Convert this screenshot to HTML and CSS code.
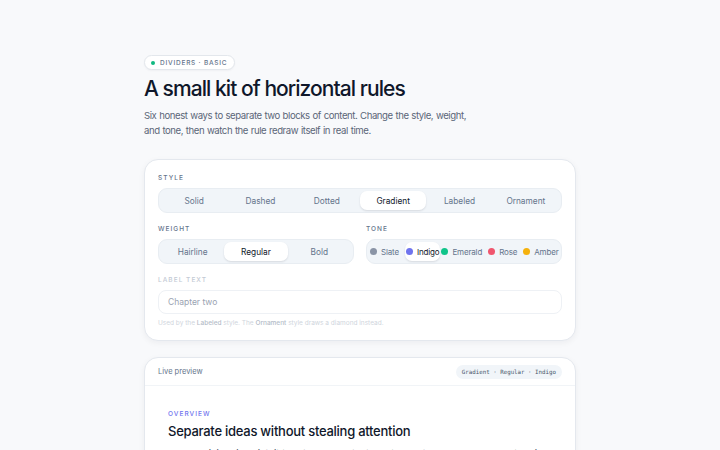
FILE: index.html
```html
<!DOCTYPE html>
<html>
<head>
<meta charset="utf-8">
<link rel="stylesheet" href="styles.css">
</head>
<body>
<main class="page">
  <div class="eyebrow"><span class="dot"></span>DIVIDERS · BASIC</div>
  <h1 class="title">A small kit of horizontal rules</h1>
  <p class="lead">Six honest ways to separate two blocks of content. Change the style, weight, and tone, then watch the rule redraw itself in real time.</p>

  <section class="card controls">
    <div class="label">STYLE</div>
    <div class="seg seg-6">
      <span class="opt">Solid</span>
      <span class="opt">Dashed</span>
      <span class="opt">Dotted</span>
      <span class="opt active">Gradient</span>
      <span class="opt">Labeled</span>
      <span class="opt">Ornament</span>
    </div>
    <div class="row">
      <div class="col">
        <div class="label">WEIGHT</div>
        <div class="seg seg-3">
          <span class="opt">Hairline</span>
          <span class="opt active">Regular</span>
          <span class="opt">Bold</span>
        </div>
      </div>
      <div class="col">
        <div class="label">TONE</div>
        <div class="seg tones">
          <span class="tone"><i class="sw slate"></i>Slate</span>
          <span class="tone active"><i class="sw indigo"></i>Indigo</span>
          <span class="tone"><i class="sw emerald"></i>Emerald</span>
          <span class="tone"><i class="sw rose"></i>Rose</span>
          <span class="tone"><i class="sw amber"></i>Amber</span>
        </div>
      </div>
    </div>
    <div class="disabled">
      <div class="label">LABEL TEXT</div>
      <div class="input">Chapter two</div>
      <div class="help">Used by the <b>Labeled</b> style. The <b>Ornament</b> style draws a diamond instead.</div>
    </div>
  </section>

  <section class="card preview">
    <header class="phead">
      <span class="ptitle">Live preview</span>
      <span class="badge">Gradient · Regular · Indigo</span>
    </header>
    <div class="pbody">
      <div class="kicker">OVERVIEW</div>
      <h2 class="ph">Separate ideas without stealing attention</h2>
      <p class="pp">A good divider is quiet: it tells the reader that one thought has ended and another is about to begin, without shouting.</p>
    </div>
  </section>
</main>
</body>
</html>
```

FILE: styles.css
```css
* { box-sizing: border-box; }
html, body { margin: 0; padding: 0; }
body {
  background: #f8f9fb;
  font-family: Inter, "Noto Sans", sans-serif;
  color: #0f172a;
}
.page {
  width: 432px;
  margin: 0 auto;
  padding-top: 55px;
}
.eyebrow {
  display: flex;
  width: max-content;
  align-items: center;
  gap: 5px;
  height: 15px;
  padding: 0 7px 0 6px;
  border: 1px solid #e3e7ec;
  border-radius: 999px;
  background: #fff;
  font-size: 6.5px;
  letter-spacing: 0.12em;
  color: #64748b;
  font-weight: 500;
  box-shadow: 0 1px 2px rgba(15,23,42,0.04);
}
.dot { width: 4px; height: 4px; border-radius: 50%; background: #10b981; }
.title {
  margin: 5px 0 0;
  font-size: 21px;
  line-height: 28px;
  font-weight: 500;
  letter-spacing: -0.045em;
  color: #0f172a;
}
.lead {
  margin: 5px 0 0;
  width: 330px;
  font-size: 9.6px;
  line-height: 15px;
  color: #5b6678;
  letter-spacing: -0.045em;
  word-spacing: 0.05em;
}
.card {
  background: #fff;
  border: 1px solid #e4e8ee;
  border-radius: 14px;
  box-shadow: 0 2px 6px rgba(15,23,42,0.05);
}
.controls {
  margin-top: 21px;
  padding: 14px 13px 13px;
}
.label {
  font-size: 6.5px;
  letter-spacing: 0.16em;
  font-weight: 500;
  color: #64748b;
  line-height: 8px;
  margin-bottom: 6px;
}
.seg {
  display: grid;
  height: 25px;
  padding: 2px;
  background: #f1f5f9;
  border: 1px solid #e8edf2;
  border-radius: 9px;
}
.seg-6 { grid-template-columns: repeat(6, 1fr); }
.seg-3 { grid-template-columns: repeat(3, 1fr); }
.opt {
  display: flex;
  align-items: center;
  justify-content: center;
  font-size: 8.3px;
  color: #64748b;
  border-radius: 7px;
}
.opt.active, .tone.active {
  background: #fff;
  color: #0f172a;
  box-shadow: 0 1px 2px rgba(15,23,42,0.12);
}
.row {
  display: grid;
  grid-template-columns: minmax(0, 1fr) minmax(0, 1fr);
  gap: 12px;
  margin-top: 12px;
}
.col { min-width: 0; }
.tones {
  display: flex;
  align-items: stretch;
  padding-left: 3px;
  overflow: hidden;
}
.tone {
  display: flex;
  flex: none;
  align-items: center;
  gap: 4px;
  margin-right: 6px;
  font-size: 8px;
  letter-spacing: -0.02em;
  color: #64748b;
  border-radius: 7px;
  white-space: nowrap;
}
.tone.active { margin-right: 1px; padding: 0 1px 0 1px; margin-left: 0; }
.sw { display: inline-block; width: 7px; height: 7px; border-radius: 50%; }
.slate { background: #8a94a6; }
.indigo { background: #6f74ee; }
.emerald { background: #10c48a; }
.rose { background: #f0566e; }
.amber { background: #f5b10c; }
.disabled { margin-top: 12px; }
.disabled .label { color: #c3cad4; }
.input {
  height: 24px;
  border: 1px solid #eef1f5;
  border-radius: 8px;
  display: flex;
  align-items: center;
  padding-left: 9px;
  font-size: 8.5px;
  color: #9aa3b2;
}
.help {
  margin-top: 5px;
  font-size: 6.5px;
  color: #cfd5dd;
  line-height: 8px;
}
.help b { font-weight: 500; color: #b4bcc8; }
.preview {
  margin-top: 16px;
  overflow: hidden;
}
.phead {
  display: flex;
  align-items: center;
  justify-content: space-between;
  height: 28px;
  padding: 0 13px;
  border-bottom: 1px solid #f1f4f7;
}
.ptitle { font-size: 7.5px; color: #64748b; }
.badge {
  font-family: "DejaVu Sans Mono", "Liberation Mono", monospace;
  font-size: 5.8px;
  line-height: 8px;
  color: #475569;
  background: #f1f5f9;
  border-radius: 999px;
  padding: 3px 6px;
}
.pbody { padding: 24px 23px 30px; }
.kicker {
  font-size: 6.5px;
  letter-spacing: 0.16em;
  color: #6f74ee;
  font-weight: 500;
  line-height: 8px;
}
.ph {
  margin: 4px 0 0;
  font-size: 13px;
  font-weight: 500;
  letter-spacing: -0.02em;
  line-height: 18px;
  color: #0f172a;
}
.pp {
  margin: 6px 0 0;
  font-size: 9.5px;
  line-height: 15px;
  color: #475569;
}
```
